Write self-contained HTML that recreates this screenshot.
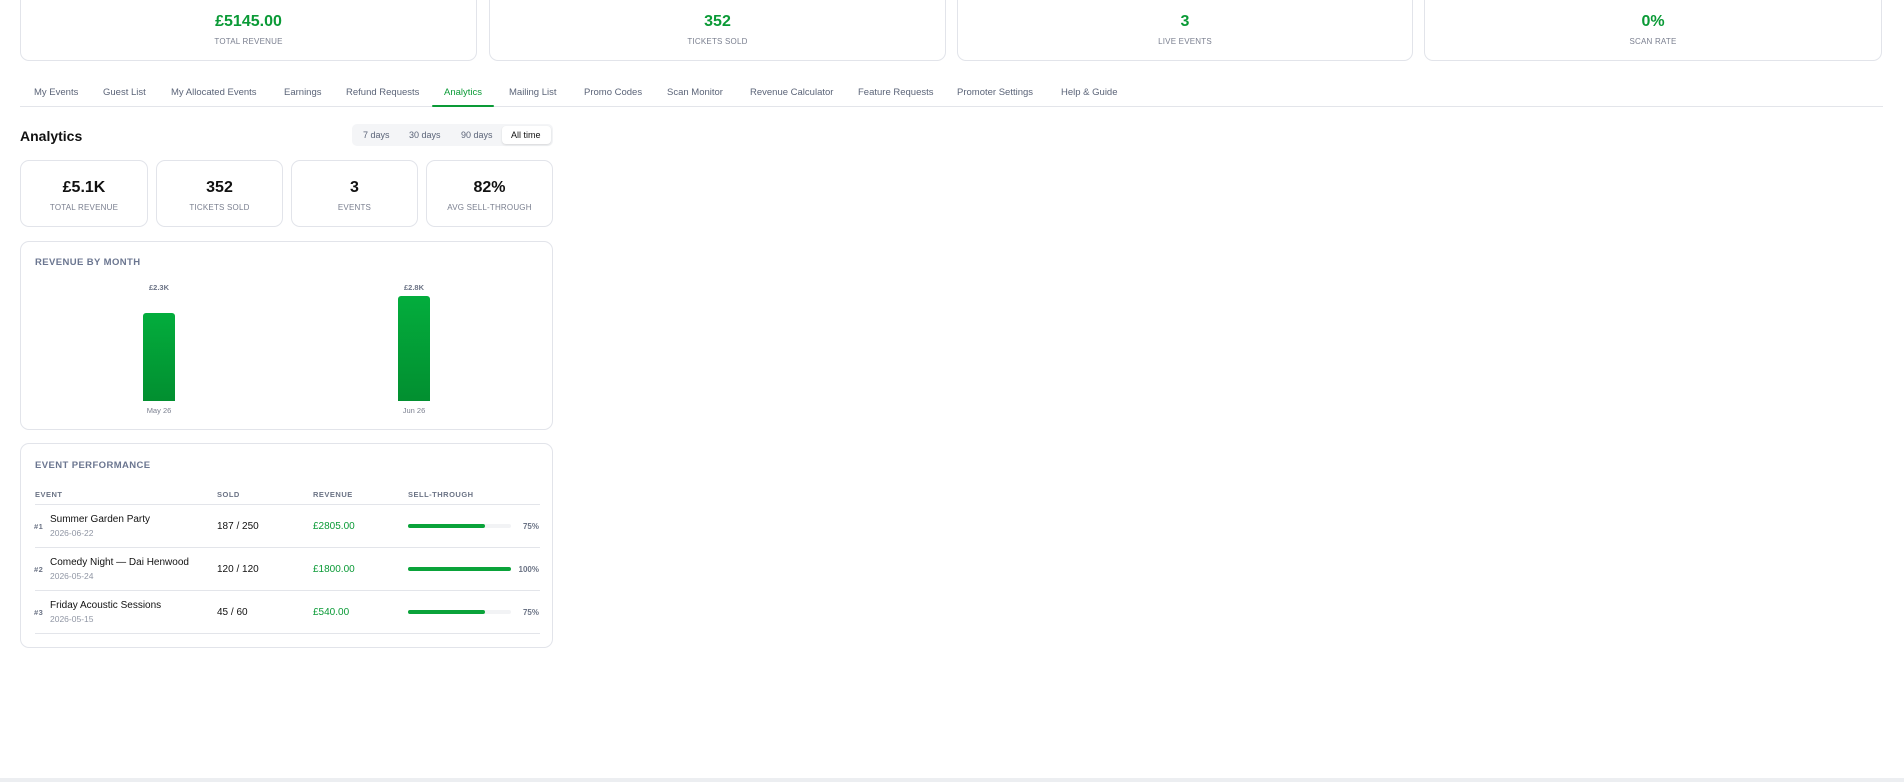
<!DOCTYPE html>
<html><head><meta charset="utf-8"><style>
*{box-sizing:border-box;margin:0;padding:0}
body{width:1904px;height:782px;background:#fff;font-family:"Liberation Sans",sans-serif;position:relative;overflow:hidden;color:#111}
.a{position:absolute}
.card{position:absolute;border:1px solid #e2e4ea;border-radius:9px;background:#fff}
.tc{text-align:center}
.big{font-weight:bold;font-size:16px;color:#0a9a36}
.lab{font-size:8px;color:#7a7f8f;letter-spacing:.2px}
.tab{position:absolute;top:87px;font-size:9.5px;color:#5b6478}
.sv{font-weight:bold;font-size:16px;color:#111}
.th{font-size:7.5px;font-weight:bold;color:#6b7385;letter-spacing:.5px}
.ttl{font-size:9.5px;font-weight:bold;color:#6b7690;letter-spacing:.4px}
.line{position:absolute;left:35px;width:505px;height:1px;background:#e3e5ea}
.nm{font-size:10px;color:#111}
.dt{font-size:8.5px;color:#9096a4}
.rev{font-size:10px;color:#0a9a36}
.bg{position:absolute;left:408px;width:103px;height:4px;border-radius:2px;background:#f2f3f5}
.fg{position:absolute;left:0;top:0;height:4px;border-radius:2px;background:#0aa33a}
.pct{position:absolute;right:1365px;font-size:8px;font-weight:bold;color:#6b7385}
</style></head><body>
<div class="card" style="left:20px;top:-10px;width:457px;height:71px"></div>
<div class="card" style="left:489px;top:-10px;width:457px;height:71px"></div>
<div class="card" style="left:957px;top:-10px;width:456px;height:71px"></div>
<div class="card" style="left:1424px;top:-10px;width:458px;height:71px"></div>
<div class="a tc big" style="left:20px;width:457px;top:13px">£5145.00</div>
<div class="a tc lab" style="left:20px;width:457px;top:37px">TOTAL REVENUE</div>
<div class="a tc big" style="left:489px;width:457px;top:13px">352</div>
<div class="a tc lab" style="left:489px;width:457px;top:37px">TICKETS SOLD</div>
<div class="a tc big" style="left:957px;width:456px;top:13px">3</div>
<div class="a tc lab" style="left:957px;width:456px;top:37px">LIVE EVENTS</div>
<div class="a tc big" style="left:1424px;width:458px;top:13px">0%</div>
<div class="a tc lab" style="left:1424px;width:458px;top:37px">SCAN RATE</div>

<div class="tab" style="left:34px">My Events</div>
<div class="tab" style="left:103px">Guest List</div>
<div class="tab" style="left:171px">My Allocated Events</div>
<div class="tab" style="left:284px">Earnings</div>
<div class="tab" style="left:346px">Refund Requests</div>
<div class="tab" style="left:444px;color:#0a9a36">Analytics</div>
<div class="tab" style="left:509px">Mailing List</div>
<div class="tab" style="left:584px">Promo Codes</div>
<div class="tab" style="left:667px">Scan Monitor</div>
<div class="tab" style="left:750px">Revenue Calculator</div>
<div class="tab" style="left:858px">Feature Requests</div>
<div class="tab" style="left:957px">Promoter Settings</div>
<div class="tab" style="left:1061px">Help &amp; Guide</div>
<div class="a" style="left:20px;top:106px;width:1863px;height:1px;background:#e3e5ea"></div>
<div class="a" style="left:432px;top:105px;width:62px;height:2px;background:#0a9a36;border-radius:1px"></div>

<div class="a" style="left:20px;top:128px;font-size:14px;font-weight:bold">Analytics</div>
<div class="a" style="left:352px;top:124px;width:201px;height:22px;background:#f4f5f7;border-radius:5px"></div>
<div class="a" style="left:502px;top:126px;width:49px;height:18px;background:#fff;border-radius:4px;box-shadow:0 1px 2px rgba(0,0,0,.12)"></div>
<div class="a" style="left:363px;top:130px;font-size:9px;color:#5b6478">7 days</div>
<div class="a" style="left:409px;top:130px;font-size:9px;color:#5b6478">30 days</div>
<div class="a" style="left:461px;top:130px;font-size:9px;color:#5b6478">90 days</div>
<div class="a" style="left:511px;top:130px;font-size:9px;color:#111">All time</div>

<div class="card" style="left:20px;top:160px;width:128px;height:67px"></div>
<div class="card" style="left:156px;top:160px;width:127px;height:67px"></div>
<div class="card" style="left:291px;top:160px;width:127px;height:67px"></div>
<div class="card" style="left:426px;top:160px;width:127px;height:67px"></div>
<div class="a tc sv" style="left:20px;width:128px;top:179px">£5.1K</div>
<div class="a tc lab" style="left:20px;width:128px;top:203px">TOTAL REVENUE</div>
<div class="a tc sv" style="left:156px;width:127px;top:179px">352</div>
<div class="a tc lab" style="left:156px;width:127px;top:203px">TICKETS SOLD</div>
<div class="a tc sv" style="left:291px;width:127px;top:179px">3</div>
<div class="a tc lab" style="left:291px;width:127px;top:203px">EVENTS</div>
<div class="a tc sv" style="left:426px;width:127px;top:179px">82%</div>
<div class="a tc lab" style="left:426px;width:127px;top:203px">AVG SELL-THROUGH</div>

<div class="card" style="left:20px;top:241px;width:533px;height:189px"></div>
<div class="a ttl" style="left:35px;top:257px">REVENUE BY MONTH</div>
<div class="a tc" style="left:129px;width:60px;top:283px;font-size:7.5px;font-weight:bold;color:#6b7385">£2.3K</div>
<div class="a" style="left:143px;top:313px;width:32px;height:88px;border-radius:3px 3px 0 0;background:linear-gradient(#03ad3d,#028f30)"></div>
<div class="a tc" style="left:129px;width:60px;top:406px;font-size:7.5px;color:#7a7f8f">May 26</div>
<div class="a tc" style="left:384px;width:60px;top:283px;font-size:7.5px;font-weight:bold;color:#6b7385">£2.8K</div>
<div class="a" style="left:398px;top:296px;width:32px;height:105px;border-radius:3px 3px 0 0;background:linear-gradient(#03ad3d,#028f30)"></div>
<div class="a tc" style="left:384px;width:60px;top:406px;font-size:7.5px;color:#7a7f8f">Jun 26</div>

<div class="card" style="left:20px;top:443px;width:533px;height:205px"></div>
<div class="a ttl" style="left:35px;top:460px">EVENT PERFORMANCE</div>
<div class="a th" style="left:35px;top:490px">EVENT</div>
<div class="a th" style="left:217px;top:490px">SOLD</div>
<div class="a th" style="left:313px;top:490px">REVENUE</div>
<div class="a th" style="left:408px;top:490px">SELL-THROUGH</div>
<div class="line" style="top:504px"></div>

<div class="a th" style="left:34px;top:522px">#1</div>
<div class="a nm" style="left:50px;top:514px">Summer Garden Party</div>
<div class="a dt" style="left:50px;top:528px">2026-06-22</div>
<div class="a nm" style="left:217px;top:521px">187 / 250</div>
<div class="a rev" style="left:313px;top:521px">£2805.00</div>
<div class="bg" style="top:524px"><div class="fg" style="width:77px"></div></div>
<div class="pct" style="top:522px">75%</div>
<div class="line" style="top:547px"></div>

<div class="a th" style="left:34px;top:565px">#2</div>
<div class="a nm" style="left:50px;top:557px">Comedy Night — Dai Henwood</div>
<div class="a dt" style="left:50px;top:571px">2026-05-24</div>
<div class="a nm" style="left:217px;top:564px">120 / 120</div>
<div class="a rev" style="left:313px;top:564px">£1800.00</div>
<div class="bg" style="top:567px"><div class="fg" style="width:103px"></div></div>
<div class="pct" style="top:565px">100%</div>
<div class="line" style="top:590px"></div>

<div class="a th" style="left:34px;top:608px">#3</div>
<div class="a nm" style="left:50px;top:600px">Friday Acoustic Sessions</div>
<div class="a dt" style="left:50px;top:614px">2026-05-15</div>
<div class="a nm" style="left:217px;top:607px">45 / 60</div>
<div class="a rev" style="left:313px;top:607px">£540.00</div>
<div class="bg" style="top:610px"><div class="fg" style="width:77px"></div></div>
<div class="pct" style="top:608px">75%</div>
<div class="line" style="top:633px"></div>

<div class="a" style="left:0;top:778px;width:1904px;height:4px;background:#eceef1"></div>
</body></html>
